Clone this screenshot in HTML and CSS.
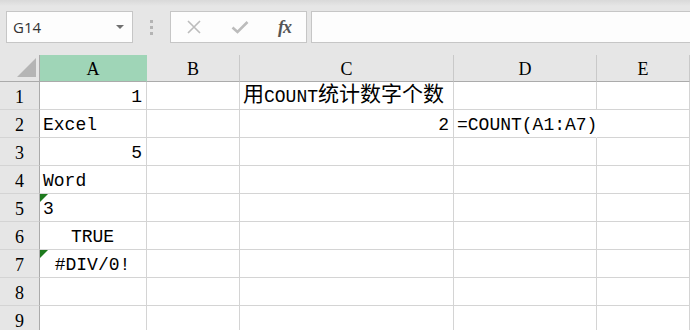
FILE: index.html
```html
<!DOCTYPE html>
<html lang="zh-CN">
<head>
    <meta charset="UTF-8">
    <title>COUNT</title>
    <link rel="stylesheet" href="styles.css">
</head>
<body>
    <div class="toolbar">
        <div class="name-box">
            <span>G14</span>
            <span class="drop"></span>
        </div>
        <div class="grip"><i></i><i></i><i></i></div>
        <div class="fx-box">
            <svg width="16" height="16" viewBox="0 0 16 16"><path d="M2 2 L14 14 M14 2 L2 14" stroke="#bcbcbc" stroke-width="1.6" fill="none"/></svg>
            <svg width="18" height="16" viewBox="0 0 18 16"><path d="M1.5 8.5 L6.5 13 L16.5 3" stroke="#bcbcbc" stroke-width="2.6" fill="none"/></svg>
            <span class="fx">fx</span>
        </div>
        <div class="formula"></div>
    </div>

    <div class="sheet">
        <div class="hdr corner"><span class="tri"></span></div>
        <div class="hdr col active">A</div>
        <div class="hdr col">B</div>
        <div class="hdr col">C</div>
        <div class="hdr col">D</div>
        <div class="hdr col">E</div>

        <div class="hdr row">1</div>
        <div class="cell num">1</div>
        <div class="cell"></div>
        <div class="cell"><span class="cjk">用</span>COUNT<span class="cjk">统计数字个数</span></div>
        <div class="cell"></div>
        <div class="cell"></div>

        <div class="hdr row">2</div>
        <div class="cell">Excel</div>
        <div class="cell"></div>
        <div class="cell num">2</div>
        <div class="cell spill">=COUNT(A1:A7)</div>
        <div class="cell"></div>

        <div class="hdr row">3</div>
        <div class="cell num">5</div>
        <div class="cell"></div>
        <div class="cell"></div>
        <div class="cell"></div>
        <div class="cell"></div>

        <div class="hdr row">4</div>
        <div class="cell">Word</div>
        <div class="cell"></div>
        <div class="cell"></div>
        <div class="cell"></div>
        <div class="cell"></div>

        <div class="hdr row">5</div>
        <div class="cell flag">3</div>
        <div class="cell"></div>
        <div class="cell"></div>
        <div class="cell"></div>
        <div class="cell"></div>

        <div class="hdr row">6</div>
        <div class="cell mid">TRUE</div>
        <div class="cell"></div>
        <div class="cell"></div>
        <div class="cell"></div>
        <div class="cell"></div>

        <div class="hdr row">7</div>
        <div class="cell mid flag">#DIV/0!</div>
        <div class="cell"></div>
        <div class="cell"></div>
        <div class="cell"></div>
        <div class="cell"></div>

        <div class="hdr row">8</div>
        <div class="cell"></div>
        <div class="cell"></div>
        <div class="cell"></div>
        <div class="cell"></div>
        <div class="cell"></div>

        <div class="hdr row">9</div>
        <div class="cell"></div>
        <div class="cell"></div>
        <div class="cell"></div>
        <div class="cell"></div>
        <div class="cell"></div>
    </div>
</body>
</html>
```

FILE: styles.css
```css
body { margin: 0; width: 690px; height: 330px; overflow: hidden; background: #fff; font-family: "Liberation Mono", "Noto Sans CJK SC", monospace; color: #000; }

.toolbar { height: 55px; box-sizing: border-box; padding: 11px 0 0 6px; display: flex; align-items: flex-start; background: linear-gradient(#d9d9d9, #e6e6e6 6px); }
.name-box { width: 127px; height: 32px; box-sizing: border-box; border: 1px solid #c6c6c6; background: #fdfdfd; display: flex; align-items: center; justify-content: space-between; padding: 0 8px 0 6px; font: 15px "Open Sans", "Noto Sans", sans-serif; color: #333; }
.drop { width: 0; height: 0; border-left: 4px solid transparent; border-right: 4px solid transparent; border-top: 4px solid #707070; }
.grip { width: 37px; display: flex; flex-direction: column; align-items: center; gap: 3px; padding-top: 9px; }
.grip i { width: 3px; height: 3px; background: #b4b4b4; }
.fx-box { width: 137px; height: 32px; box-sizing: border-box; border: 1px solid #c6c6c6; background: #fdfdfd; display: flex; align-items: center; justify-content: space-between; padding: 0 15px 0 15px; }
.fx { font: italic bold 18px "Liberation Serif", serif; color: #555; letter-spacing: -1px; }
.formula { flex: 1; height: 32px; margin-left: 4px; box-sizing: border-box; border: 1px solid #c6c6c6; border-right: none; background: #fdfdfd; }

.sheet { display: grid; grid-template-columns: 40px 107px 93px 214px 143px 93px; grid-template-rows: 27px; grid-auto-rows: 28px; background: #fff; }
.hdr { background: #e6e6e6; font: 18px "Liberation Serif", serif; display: flex; align-items: center; justify-content: center; box-sizing: border-box; }
.col { border-right: 1px solid #c9c9c9; border-bottom: 1px solid #ababab; padding-top: 2px; }
.col.active { background: #9fd5b7; border-right-color: #9fd5b7; }
.corner { border-right: 1px solid #ababab; border-bottom: 1px solid #ababab; align-items: flex-end; justify-content: flex-end; padding: 0 3px 4px 0; }
.tri { width: 0; height: 0; border-left: 19px solid transparent; border-bottom: 19px solid #b5b5b5; }
.row { border-right: 1px solid #ababab; border-bottom: 1px solid #d4d4d4; padding-top: 4px; }

.cell { box-sizing: border-box; border-right: 1px solid #d4d4d4; border-bottom: 1px solid #d4d4d4; font-size: 18px; display: flex; align-items: flex-end; padding: 0 4px 2px 3px; white-space: nowrap; position: relative; }
.cell.num { justify-content: flex-end; }
.cell.mid { justify-content: center; }
.cell.spill { border-right-color: transparent; overflow: visible; }
.cjk { font-size: 21px; }
.flag::before { content: ""; position: absolute; left: 0; top: 0; border-top: 8px solid #1e7a1e; border-right: 8px solid transparent; }
```
